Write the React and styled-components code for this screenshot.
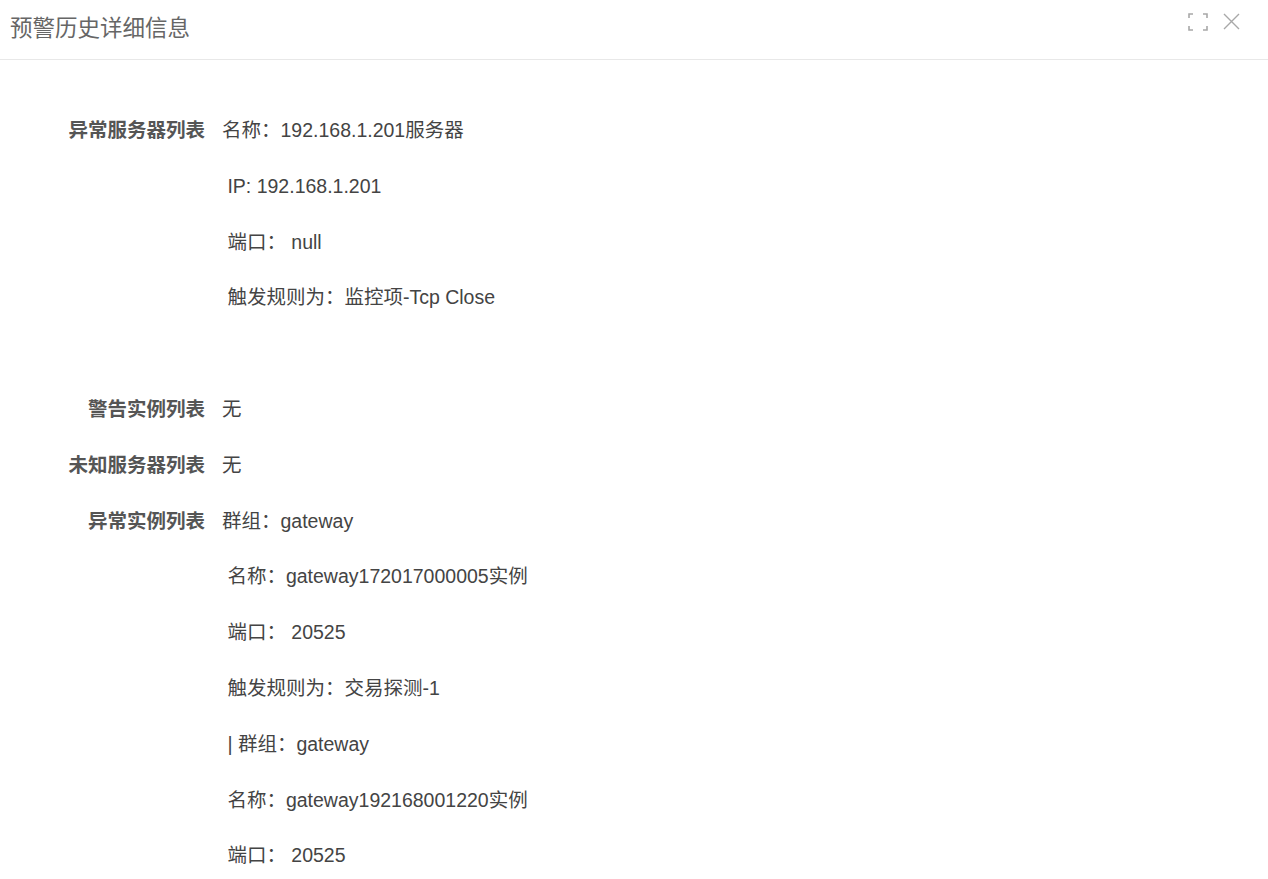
import React from 'react';
import styled, { createGlobalStyle } from 'styled-components';

const GlobalStyle = createGlobalStyle`
    html, body {
        margin: 0;
        padding: 0;
        background: #fff;
        font-family: "Liberation Sans", "Noto Sans CJK SC", sans-serif;
    }
`;

const rows = [
    {
        label: '异常服务器列表',
        lines: ['名称：192.168.1.201服务器', ' IP: 192.168.1.201', ' 端口： null', ' 触发规则为：监控项-Tcp Close', ''],
    },
    { label: '警告实例列表', lines: ['无'] },
    { label: '未知服务器列表', lines: ['无'] },
    {
        label: '异常实例列表',
        lines: [
            '群组：gateway',
            ' 名称：gateway172017000005实例',
            ' 端口： 20525',
            ' 触发规则为：交易探测-1',
            ' | 群组：gateway',
            ' 名称：gateway192168001220实例',
            ' 端口： 20525',
        ],
    },
];

function App() {
    return (
        <>
            <GlobalStyle />
            <Dialog>
                <Header>
                    <Title>预警历史详细信息</Title>
                    <Tools>
                        <IconButton aria-label="fullscreen">
                            <svg width="20" height="18" viewBox="0 0 20 18" fill="none" stroke="#a8a8a8" strokeWidth="1.6">
                                <path d="M1 5V1h4M15 1h4v4M19 13v4h-4M5 17H1v-4" />
                            </svg>
                        </IconButton>
                        <IconButton aria-label="close">
                            <svg width="17" height="17" viewBox="0 0 17 17" fill="none" stroke="#a8a8a8" strokeWidth="1.4">
                                <path d="M1 1l15 15M16 1L1 16" />
                            </svg>
                        </IconButton>
                    </Tools>
                </Header>
                <Body>
                    {rows.map((row, i) => (
                        <Row key={i}>
                            <Label>{row.label}</Label>
                            <Value>
                                {row.lines.map((line, j) => (
                                    <Line key={j}>{line}</Line>
                                ))}
                            </Value>
                        </Row>
                    ))}
                </Body>
            </Dialog>
        </>
    );
}

const Dialog = styled.div`
    width: 1268px;
    min-height: 879px;
    background: #fff;
    overflow: hidden;
`;

const Header = styled.div`
    height: 60px;
    border-bottom: 1px solid #e8e8e8;
    display: flex;
    align-items: center;
    justify-content: space-between;
    padding: 0 28px 0 10px;
    box-sizing: border-box;
`;

const Title = styled.div`
    font-size: 22.5px;
    color: #666;
    margin-top: -8px;
`;

const Tools = styled.div`
    display: flex;
    align-items: center;
    gap: 15px;
    margin-top: -16px;
`;

const IconButton = styled.span`
    display: flex;
    align-items: center;
    cursor: pointer;
`;

const Body = styled.div`
    padding-top: 43px;
    display: flex;
    flex-direction: column;
`;

const Row = styled.div`
    display: flex;
    font-size: 19.5px;
    line-height: 55.8px;
`;

const Label = styled.div`
    width: 205px;
    flex: none;
    text-align: right;
    font-weight: bold;
    color: #555;
`;

const Value = styled.div`
    margin-left: 17px;
    color: #444;
`;

const Line = styled.div`
    white-space: pre;
    min-height: 55.8px;
`;

export default App;
